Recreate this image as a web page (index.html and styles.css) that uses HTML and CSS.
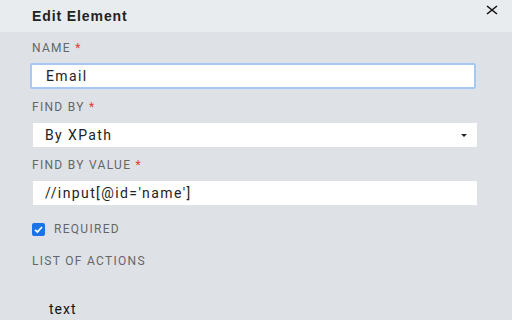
FILE: index.html
```html
<!DOCTYPE html>
<html lang="en">
<head>
    <meta charset="UTF-8">
    <title>Edit Element</title>
    <link rel="stylesheet" href="styles.css">
</head>
<body>
    <div class="modal">
        <div class="modal-header">
            <span class="modal-title">Edit Element</span>
            <button class="close" aria-label="Close">
                <svg width="12" height="10" viewBox="0 0 12 10"><path d="M1 1 L11 9 M11 1 L1 9" stroke="#111" stroke-width="1.6"/></svg>
            </button>
        </div>
        <div class="modal-body">
            <label class="label">Name <span class="req">*</span></label>
            <input type="text" class="field focused" value="Email">

            <label class="label">Find by <span class="req">*</span></label>
            <div class="field select">
                <span>By XPath</span>
                <span class="caret"></span>
            </div>

            <label class="label">Find by value <span class="req">*</span></label>
            <input type="text" class="field" value="//input[@id='name']">

            <div class="check-row">
                <span class="checkbox">
                    <svg width="13" height="13" viewBox="0 0 13 13"><rect width="13" height="13" rx="2" fill="#1a73e8"/><path d="M3 6.8 L5.4 9 L10 4" stroke="#fff" stroke-width="1.8" fill="none"/></svg>
                </span>
                <span class="label inline">Required</span>
            </div>

            <div class="label">List of actions</div>
            <div class="action">text</div>
        </div>
    </div>
</body>
</html>
```

FILE: styles.css
```css
body {
    margin: 0;
    font-family: Roboto, "Liberation Sans", Arial, sans-serif;
    background: #dee2e6;
    width: 512px;
    height: 320px;
    overflow: hidden;
}
.modal-header {
    background: #e9ecef;
    height: 32px;
    display: flex;
    align-items: center;
    justify-content: space-between;
    padding: 0 14px 0 32px;
}
.modal-title {
    font-family: "Liberation Sans", Arial, sans-serif;
    font-weight: bold;
    font-size: 14px;
    letter-spacing: 0.9px;
    color: #222;
}
.close {
    background: none;
    border: none;
    padding: 0;
    margin-top: -12px;
    display: flex;
}
.modal-body {
    padding: 9px 36px 0 32px;
}
.label {
    display: block;
    font-size: 12px;
    line-height: 14px;
    text-transform: uppercase;
    color: #666;
    letter-spacing: 1.3px;
    margin-bottom: 9px;
}
.label.inline {
    display: inline;
    margin: 0;
}
.req {
    color: #e53935;
}
.field {
    display: flex;
    align-items: center;
    box-sizing: border-box;
    width: 444px;
    height: 24px;
    margin: 0 0 11px 1px;
    padding: 0 12px;
    border: none;
    background: #fff;
    font-family: Roboto, "Liberation Sans", Arial, sans-serif;
    font-size: 14px;
    letter-spacing: 1.4px;
    color: #222;
    outline: none;
}
.field.focused {
    width: 446px;
    height: 26px;
    margin: -1px 0 11px -2px;
    padding-left: 14px;
    border: 2px solid #a6c8f3;
    border-radius: 2px;
}
.select {
    justify-content: space-between;
}
.caret {
    width: 0;
    height: 0;
    border-left: 3.5px solid transparent;
    border-right: 3.5px solid transparent;
    border-top: 3.5px solid #222;
    margin-right: -2px;
}
.check-row {
    display: flex;
    align-items: center;
    gap: 9px;
    height: 14px;
    margin: 17px 0 18px 0;
}
.checkbox {
    display: flex;
}
.action {
    font-size: 14px;
    line-height: 16px;
    letter-spacing: 1px;
    color: #111;
    margin: 33px 0 0 17px;
}
```
